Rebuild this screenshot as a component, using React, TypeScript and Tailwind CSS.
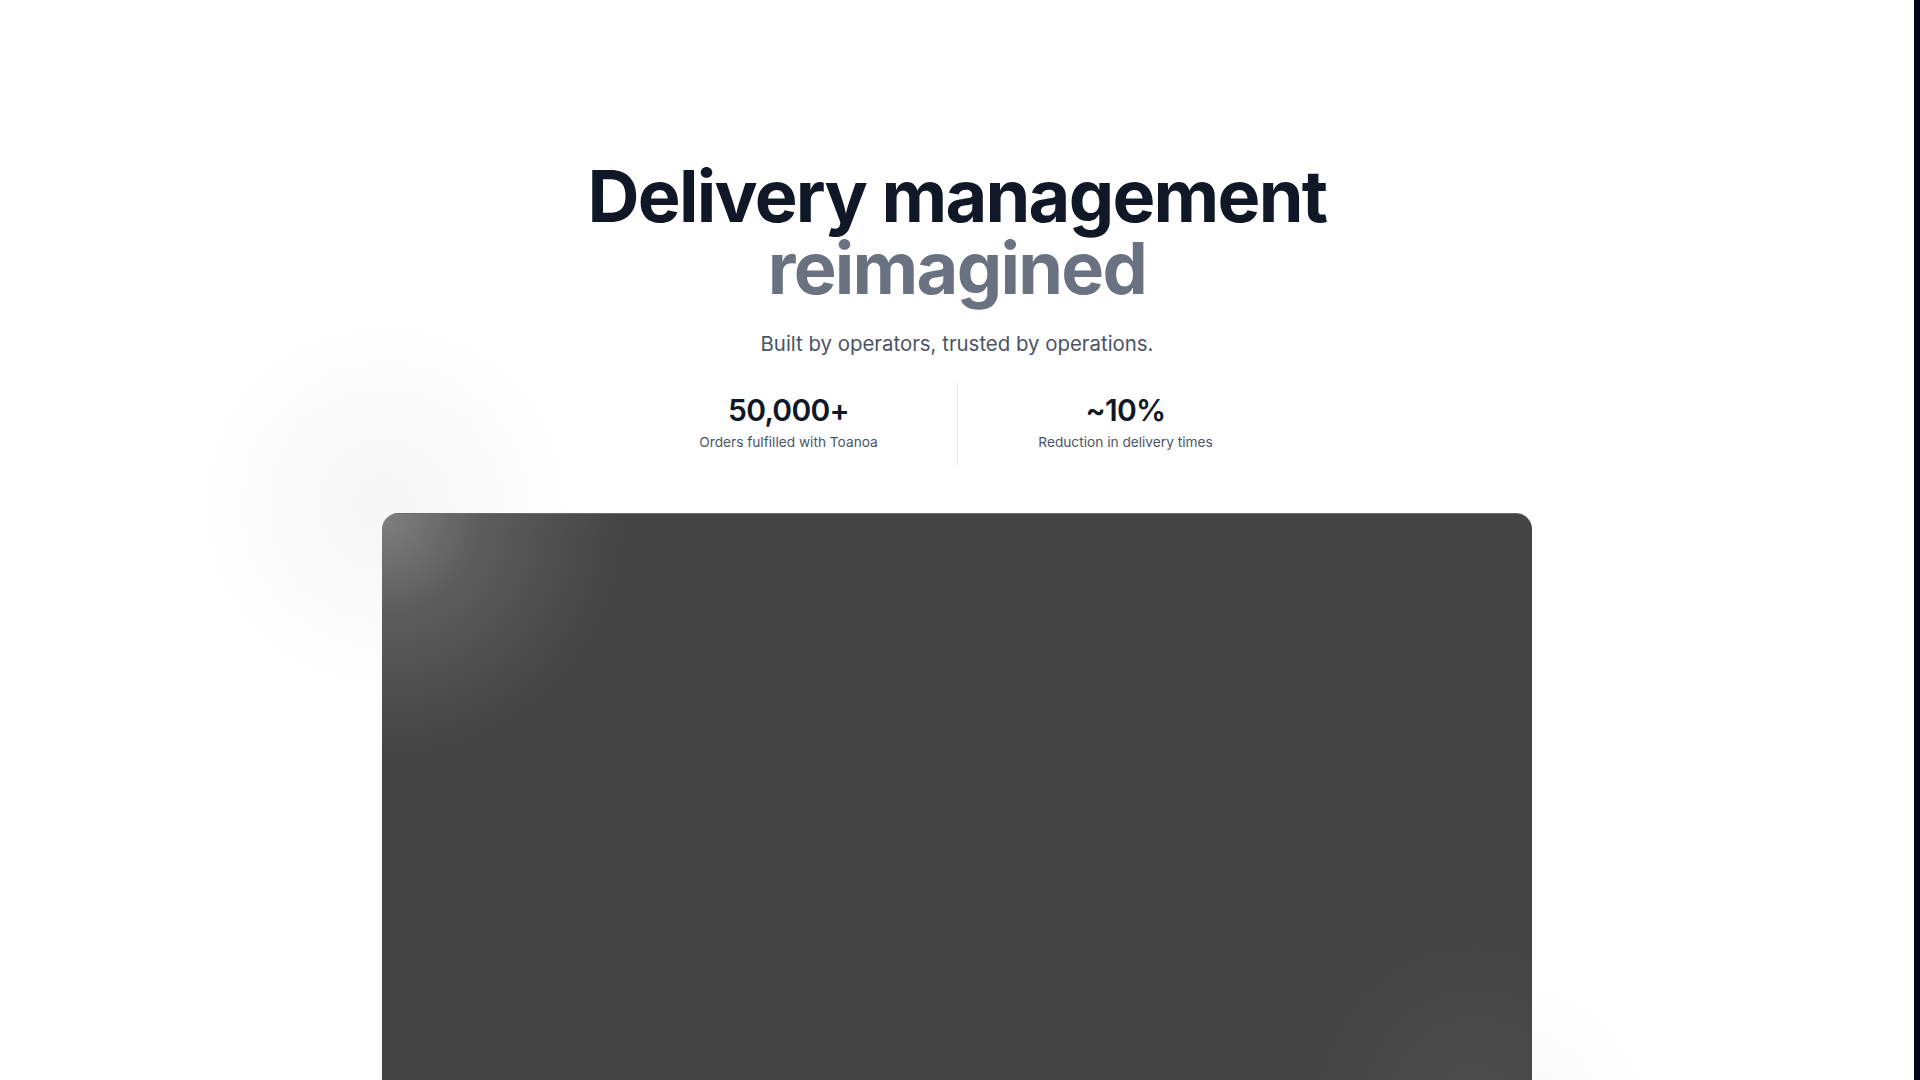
import React from 'react';

const stats = [
  { value: '50,000+', label: 'Orders fulfilled with Toanoa' },
  { value: '~10%', label: 'Reduction in delivery times' },
];

export default function App() {
  return (
    <div className="flex min-h-screen w-full bg-white" style={{ fontFamily: 'Inter, "Noto Sans", sans-serif' }}>
      <main className="relative flex-1 overflow-hidden h-[1080px]">
        {/* soft background blobs */}
        <div className="pointer-events-none absolute left-[270px] top-[390px] h-[230px] w-[230px] rounded-full bg-[#f5f5f5] blur-3xl" />
        <div className="pointer-events-none absolute left-[1430px] top-[1040px] h-[160px] w-[160px] rounded-full bg-[#f6f6f6] blur-3xl" />

        <section className="relative flex flex-col items-center pt-[160px]">
          <h1 className="text-center text-[72px] font-bold leading-[72px] tracking-[-0.024em] text-gray-900">
            <span className="block">Delivery management</span>
            <span className="block text-gray-500">reimagined</span>
          </h1>

          <p className="mt-[25px] text-[20.4px] text-gray-600">Built by operators, trusted by operations.</p>

          <div className="mt-[22px] flex items-stretch">
            {stats.map((s, i) => (
              <div key={s.value} className="flex items-stretch">
                {i > 0 && <div className="w-px bg-gray-200" />}
                <div className="flex w-[336px] flex-col items-center justify-center pt-[10px] pb-[14px]">
                  <span className="text-3xl font-semibold tracking-tight text-gray-900">{s.value}</span>
                  <span className="mt-1 text-[13.7px] text-gray-600">{s.label}</span>
                </div>
              </div>
            ))}
          </div>

          <div className="mt-[47px] h-[640px] w-[1150px] rounded-2xl border-t border-white/20 bg-[#444444] bg-[radial-gradient(circle_at_0%_0%,#808080_0px,#5c5c5c_100px,#444444_240px)]">
            <div className="h-full w-full rounded-2xl bg-[radial-gradient(circle_at_95%_92%,rgba(255,255,255,0.05)_0px,rgba(255,255,255,0)_160px)]" />
          </div>
        </section>
      </main>
      <aside className="w-[6px] shrink-0 bg-[#020617]" />
    </div>
  );
}
